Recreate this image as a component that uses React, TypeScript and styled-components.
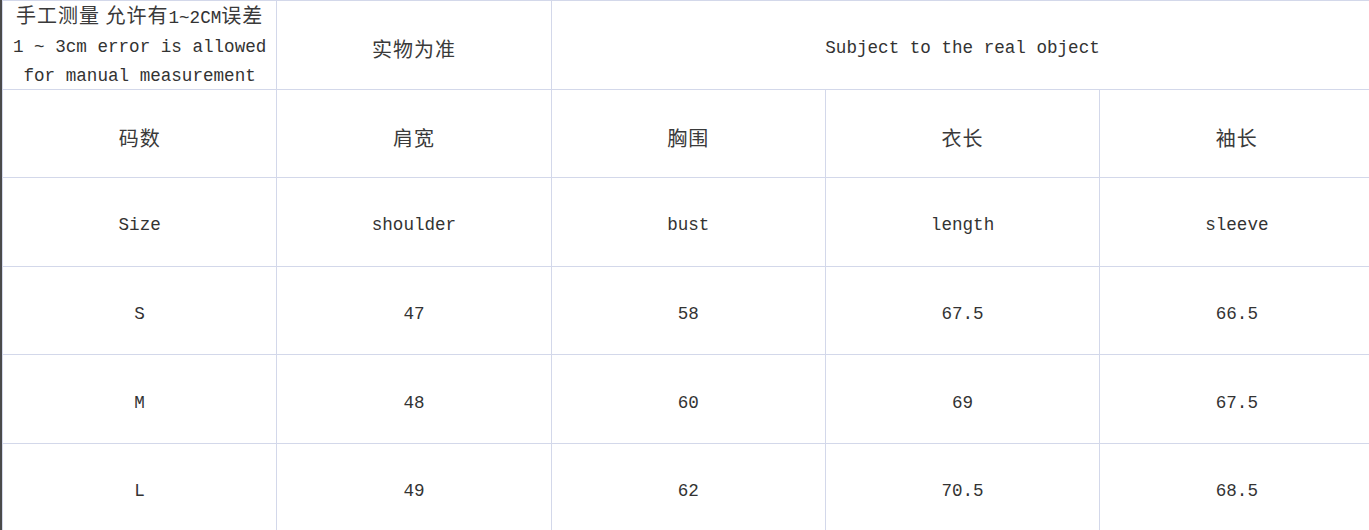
import React from "react";
import styled, { createGlobalStyle } from "styled-components";

const Global = createGlobalStyle`
  html, body {
    margin: 0;
    padding: 0;
    background: #ffffff;
  }
`;

const Page = styled.div`
  width: 1369px;
  height: 530px;
  overflow: hidden;
  border-left: 2px solid #4a4a4a;
  box-sizing: border-box;
  background: #ffffff;
`;

const Grid = styled.div`
  display: grid;
  grid-template-columns: repeat(5, 274.3px);
  grid-auto-rows: 88.6px;
  width: 1375px;
  border-top: 1px solid #d3d8ea;
  border-left: 1px solid #d3d8ea;
  font-family: "Liberation Mono", "Noto Sans CJK SC", monospace;
  font-size: 17.6px;
  color: #333333;
`;

const Cell = styled.div<{ $span?: number; $top?: boolean }>`
  grid-column: span ${(p) => p.$span ?? 1};
  display: flex;
  align-items: center;
  justify-content: center;
  text-align: center;
  box-sizing: border-box;
  border-right: 1px solid #d3d8ea;
  border-bottom: 1px solid #d3d8ea;
  padding: ${(p) => (p.$top ? "2px 2px 0" : "8px 4px 0")};
  line-height: 29px;
`;

const Cjk = styled.span`
  font-family: "Noto Sans CJK SC", sans-serif;
  font-size: 20px;
  letter-spacing: 1px;
  color: #3a3a3a;
`;

type Row = string[];

const heads: Row = ["码数", "肩宽", "胸围", "衣长", "袖长"];
const labels: Row = ["Size", "shoulder", "bust", "length", "sleeve"];
const rows: Row[] = [
  ["S", "47", "58", "67.5", "66.5"],
  ["M", "48", "60", "69", "67.5"],
  ["L", "49", "62", "70.5", "68.5"],
];

const App = () => {
  return (
    <Page>
      <Global />
      <Grid>
        <Cell $top>
          <div>
            <Cjk>手工测量 允许有</Cjk>1~2CM<Cjk>误差</Cjk>
            <br />1 ~ 3cm error is allowed
            <br />
            for manual measurement
          </div>
        </Cell>
        <Cell>
          <Cjk>实物为准</Cjk>
        </Cell>
        <Cell $span={3}>Subject to the real object</Cell>

        {heads.map((h) => (
          <Cell key={h}>
            <Cjk>{h}</Cjk>
          </Cell>
        ))}
        {labels.map((l) => (
          <Cell key={l}>{l}</Cell>
        ))}
        {rows.map((r) =>
          r.map((v, i) => <Cell key={r[0] + i}>{v}</Cell>),
        )}
      </Grid>
    </Page>
  );
};

export default App;
